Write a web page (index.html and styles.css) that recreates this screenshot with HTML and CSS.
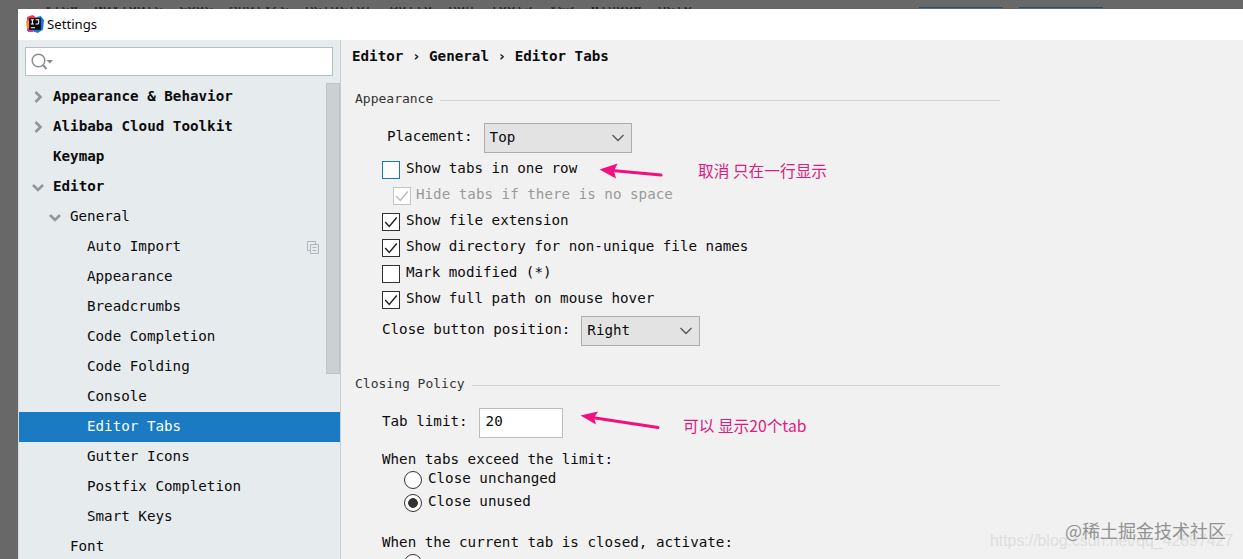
FILE: index.html
```html
<!DOCTYPE html>
<html lang="en">
<head>
    <meta charset="UTF-8">
    <meta name="viewport" content="width=device-width, initial-scale=1.0">
    <title>Settings</title>
    <link rel="stylesheet" href="styles.css">
</head>
<body>
    <div class="menubar">
        <span>View</span><span>Navigate</span><span>Code</span><span>Analyze</span><span>Refactor</span><span>Build</span><span>Run</span><span>Tools</span><span>VCS</span><span>Window</span><span>Help</span>
        <i class="tab-edge first"></i><i class="tab-edge"></i>
    </div>

    <div class="dialog">
        <div class="titlebar">
            <svg class="logo" width="18" height="18" viewBox="0 0 17 17">
                <path d="M1 2L6 0l5 3-6 12-4 0z" fill="#f0325f"/>
                <path d="M0 6l5-1v8l-4 1z" fill="#f98a3c"/>
                <path d="M10 2l4-1 3 4-1 9-5 3-5-2z" fill="#1278dc"/>
                <path d="M1 13l4-2 2 5-5 0z" fill="#c93ca0"/>
                <rect x="3" y="3" width="11" height="11" fill="#080808"/>
                <path d="M4.500 4.500h3M6 4.500v4M4.500 8.500h3M9 4.500h3v3q0 1-1 1h-2M4.500 12h4" fill="none" stroke="#fff"/>
            </svg>
            <span>Settings</span>
        </div>

        <div class="content">
            <div class="sidebar">
                <div class="search">
                    <svg width="24" height="18" viewBox="0 0 24 18">
                        <circle cx="7.500" cy="7.500" r="6.300" fill="none" stroke="#8b8f93" stroke-width="1.500"/>
                        <path d="M12 12l3.500 4" stroke="#8b8f93" stroke-width="2"/>
                        <path d="M15.500 7h6.500l-3.200 3.500z" fill="#85898c"/>
                    </svg>
                </div>
                <div class="tree">
                    <div class="row bold"><svg class="arrow" viewBox="0 0 12 12"><path d="M3.500 1l5 5-5 5"/></svg>Appearance &amp; Behavior</div>
                    <div class="row bold"><svg class="arrow" viewBox="0 0 12 12"><path d="M3.500 1l5 5-5 5"/></svg>Alibaba Cloud Toolkit</div>
                    <div class="row bold leaf">Keymap</div>
                    <div class="row bold"><svg class="arrow" viewBox="0 0 12 12"><path d="M1 4l5 5 5-5"/></svg>Editor</div>
                    <div class="row level1"><svg class="arrow" viewBox="0 0 12 12"><path d="M1 4l5 5 5-5"/></svg>General</div>
                    <div class="row level2"><span>Auto Import</span><svg class="copy" width="12" height="13" viewBox="0 0 12 13"><path d="M3 9.500H.5V.5h8V3M3.500 3.500h8v9h-8zM5.500 6.500h4M5.500 9.500h4" fill="none" stroke="#afb5b9"/></svg></div>
                    <div class="row level2">Appearance</div>
                    <div class="row level2">Breadcrumbs</div>
                    <div class="row level2">Code Completion</div>
                    <div class="row level2">Code Folding</div>
                    <div class="row level2">Console</div>
                    <div class="row level2 active">Editor Tabs</div>
                    <div class="row level2">Gutter Icons</div>
                    <div class="row level2">Postfix Completion</div>
                    <div class="row level2">Smart Keys</div>
                    <div class="row font">Font</div>
                    <div class="scrollbar"></div>
                </div>
            </div>

            <div class="panel">
                <div class="breadcrumb">Editor › General › Editor Tabs</div>

                <div class="section">Appearance</div>
                <div class="field placement">
                    <label>Placement:</label>
                    <div class="select">Top<svg width="12" height="8" viewBox="0 0 12 8"><path d="M.5 1L6 6.500 11.500 1"/></svg></div>
                </div>
                <div class="checks">
                    <div class="check"><i class="box focus"></i><span>Show tabs in one row</span></div>
                    <div class="check disabled"><i class="box"><svg viewBox="0 0 18 18"><path d="M2.500 9l4.500 5L15.500 4"/></svg></i><span>Hide tabs if there is no space</span></div>
                    <div class="check"><i class="box"><svg viewBox="0 0 18 18"><path d="M2.500 9l4.500 5L15.500 4"/></svg></i><span>Show file extension</span></div>
                    <div class="check"><i class="box"><svg viewBox="0 0 18 18"><path d="M2.500 9l4.500 5L15.500 4"/></svg></i><span>Show directory for non-unique file names</span></div>
                    <div class="check"><i class="box"></i><span>Mark modified (*)</span></div>
                    <div class="check"><i class="box"><svg viewBox="0 0 18 18"><path d="M2.500 9l4.500 5L15.500 4"/></svg></i><span>Show full path on mouse hover</span></div>
                </div>
                <div class="field position">
                    <label>Close button position:</label>
                    <div class="select">Right<svg width="12" height="8" viewBox="0 0 12 8"><path d="M.5 1L6 6.500 11.500 1"/></svg></div>
                </div>

                <div class="section closing">Closing Policy</div>
                <div class="field limit">
                    <label>Tab limit:</label>
                    <div class="input">20</div>
                </div>
                <div class="question">When tabs exceed the limit:</div>
                <div class="radio"><i></i><span>Close unchanged</span></div>
                <div class="radio on"><i></i><span>Close unused</span></div>
                <div class="question second">When the current tab is closed, activate:</div>
                <div class="radio last"><i></i></div>
            </div>
        </div>
    </div>

    <!-- Notes drawn over the dialog -->
    <svg class="arrows" width="1243" height="559">
        <path d="M612 170.500L661 175" stroke="#f0117f" stroke-width="3" stroke-linecap="round"/>
        <path d="M599.500 169.500l18-6-3.500 7.500 2 7.500z" fill="#f0117f"/>
        <path d="M592 417.500L658 427.500" stroke="#f0117f" stroke-width="3" stroke-linecap="round"/>
        <path d="M580.500 415.500l17.500-4-4 6.500 2 6.500z" fill="#f0117f"/>
    </svg>
    <div class="note note-row">取消 只在一行显示</div>
    <div class="note note-limit">可以 显示20个tab</div>
    <div class="watermark url">https://blog.csdn.net/qq_42897427</div>
    <div class="watermark site">@稀土掘金技术社区</div>
</body>
</html>
```

FILE: styles.css
```css
* {
    box-sizing: border-box;
    margin: 0;
    padding: 0;
}
body {
    width: 1243px;
    height: 559px;
    overflow: hidden;
    position: relative;
    background: #686868;
    color: #0c0c0c;
    font-family: "DejaVu Sans Mono", monospace;
    font-size: 14.23px;
}

/* Menu strip behind the dialog, only its lower edge is uncovered */
.menubar {
    position: relative;
    height: 2px;
    margin-top: 7px;
    padding-left: 44px;
    display: flex;
    gap: 16px;
    overflow: hidden;
    color: #222;
    line-height: 12px;
}
.menubar span {
    margin-top: -8px;
}
.tab-edge {
    position: absolute;
    left: 1019px;
    top: 0;
    width: 84px;
    height: 1px;
    background: #245173;
}
.tab-edge.first {
    left: 919px;
}

.dialog {
    margin-left: 18px;
    height: 550px;
    display: flex;
    flex-direction: column;
    background: #f1f1f1;
}
.titlebar {
    height: 31px;
    flex: none;
    display: flex;
    align-items: center;
    gap: 3px;
    padding: 0 0 2px 8px;
    background: #fff;
    font-family: "Noto Sans", sans-serif;
    font-size: 13.2px;
}
.content {
    flex: 1;
    display: flex;
    min-height: 0;
}

/* Left tree */
.sidebar {
    width: 323px;
    flex: none;
    padding-top: 7px;
    background: #e6ebee;
    border-left: 1px solid #d5dadd;
    border-right: 1px solid #c9cccf;
}
.search {
    width: 308px;
    height: 29px;
    margin-left: 6px;
    padding: 5px;
    background: #fff;
    border: 1px solid #b9bdc0;
}
.tree {
    position: relative;
    margin-top: 6px;
}
.row {
    position: relative;
    height: 30px;
    padding: 0 0 2px 13px;
    display: flex;
    align-items: center;
    white-space: pre;
}
.bold {
    font-weight: bold;
}
.leaf {
    padding-left: 34px;
}
.level1 {
    padding-left: 30px;
}
.level2 {
    padding-left: 68px;
}
.font {
    padding-left: 51px;
}
.active {
    background: #1a7bc3;
    color: #fff;
}
.arrow {
    width: 12px;
    height: 12px;
    margin: 2px 9px 0 0;
    flex: none;
}
.arrow path {
    fill: none;
    stroke: #92969a;
    stroke-width: 2.6;
}
.copy {
    margin: 2px 21px 0 auto;
}
.scrollbar {
    position: absolute;
    right: 0;
    top: 1px;
    width: 14px;
    height: 291px;
    background: #cdd0d3;
    border: 1px solid #c0c3c6;
}

/* Right side */
.panel {
    flex: 1;
    padding-left: 14px;
}
.breadcrumb {
    height: 32px;
    line-height: 32px;
    margin-left: -3px;
    font-weight: bold;
}
.section {
    width: 645px;
    height: 20px;
    margin-top: 16px;
    display: flex;
    align-items: center;
    gap: 7px;
    font-size: 13px;
    color: #333;
}
.section::after {
    content: "";
    flex: 1;
    height: 1px;
    margin-top: 4px;
    background: #d2d2d2;
}
.field {
    display: flex;
    height: 30px;
}
.field label {
    line-height: 26px;
}
.select {
    display: flex;
    align-items: center;
    justify-content: space-between;
    height: 30px;
    padding: 0 7px 2px 5px;
    background: #e3e3e3;
    border: 1px solid #adadad;
}
.select svg {
    margin-top: 2px;
}
.select path {
    fill: none;
    stroke: #555;
    stroke-width: 1.3;
}
.placement {
    margin-top: 15px;
    padding-left: 32px;
    gap: 11px;
}
.placement .select {
    width: 148px;
}
.checks {
    padding: 4px 0 0 27px;
}
.check {
    height: 26px;
    display: flex;
    align-items: center;
    gap: 6px;
}
.check span {
    margin-top: -4px;
}
.box {
    width: 18px;
    height: 18px;
    background: #fff;
    border: 1px solid #303030;
}
.box svg {
    display: block;
    width: 16px;
    height: 16px;
    fill: none;
    stroke: #222;
    stroke-width: 1.7;
}
.focus {
    border-color: #1976b9;
}
.disabled {
    padding-left: 11px;
    gap: 5px;
    color: #999;
}
.disabled .box {
    border-color: #c4c4c4;
}
.disabled svg {
    stroke: #bbb;
}
.position {
    margin-top: 3px;
    padding-left: 27px;
    gap: 11px;
}
.position .select {
    width: 119px;
}
.closing {
    margin-top: 27px;
}
.limit {
    margin-top: 15px;
    padding-left: 27px;
    gap: 11px;
}
.input {
    width: 84px;
    height: 30px;
    padding-left: 6px;
    line-height: 25px;
    background: #fff;
    border: 1px solid #bcbcbc;
}
.question {
    height: 20px;
    margin: 11px 0 0 27px;
    line-height: 20px;
}
.radio {
    height: 22.500px;
    margin-left: 49px;
    display: flex;
    align-items: center;
    gap: 6px;
}
.radio span {
    margin-top: -4px;
}
.radio i {
    width: 18px;
    height: 18px;
    flex: none;
    background: #fff;
    border: 1.500px solid #333;
    border-radius: 50%;
}
.radio.on i {
    background: radial-gradient(circle, #333 4.500px, #fff 5.200px);
}
.second {
    margin-top: 18px;
}

/* Overlays */
.arrows {
    position: absolute;
    left: 0;
    top: 0;
}
.note {
    position: absolute;
    color: #dc1b83;
    font: 15.700px/24px "Noto Sans CJK SC", sans-serif;
    white-space: nowrap;
}
.note-row {
    left: 698px;
    top: 159px;
}
.note-limit {
    left: 683px;
    top: 414px;
}
.watermark {
    position: absolute;
    white-space: nowrap;
}
.url {
    left: 990px;
    top: 532px;
    font: 15.850px/18px "Liberation Sans", sans-serif;
    color: #dedede;
}
.site {
    left: 1065px;
    top: 518px;
    font: 18px/24px "Noto Sans CJK SC", sans-serif;
    color: #929292;
}
```
